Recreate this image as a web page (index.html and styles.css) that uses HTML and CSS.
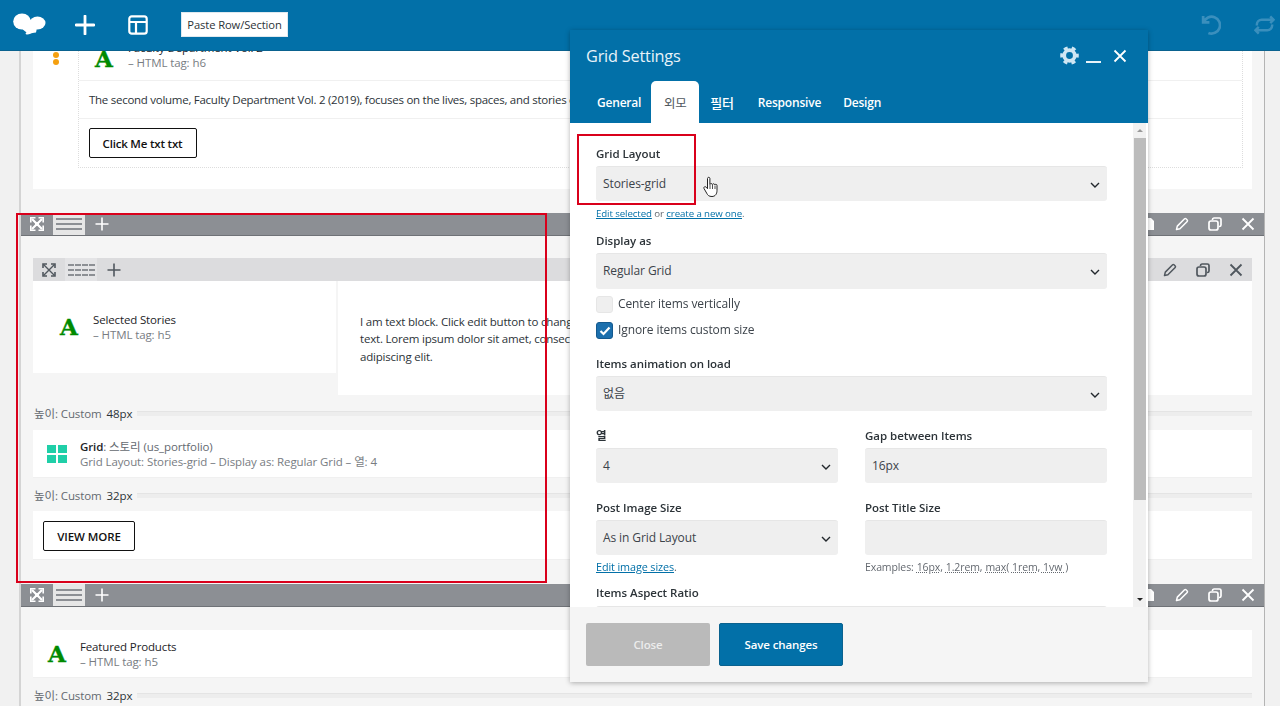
FILE: index.html
```html
<!DOCTYPE html>
<html lang="ko">
<head>
<meta charset="utf-8">
<title>Grid Settings</title>
<link rel="stylesheet" href="styles.css">
</head>
<body>
<svg class="defs" width="0" height="0" aria-hidden="true">
  <symbol id="i-expand" viewBox="0 0 14 14">
    <path d="M2 2l10 10M12 2L2 12" stroke="currentColor" stroke-width="2.200" fill="none"/>
    <path d="M.8 5.500V.8h4.700M8.500.8h4.700v4.700M13.200 8.500v4.700H8.500M5.500 13.200H.8V8.500" stroke="currentColor" stroke-width="1.600" fill="none"/>
    <circle cx="7" cy="7" r="2" fill="currentColor"/>
  </symbol>
  <symbol id="i-expand-line" viewBox="0 0 14 14">
    <path d="M1.500 1.500l11 11M12.500 1.500l-11 11" stroke="currentColor" stroke-width="1.400" fill="none"/>
    <path d="M1 5V1h4M9 1h4v4M13 9v4H9M5 13H1V9" stroke="currentColor" stroke-width="1.600" fill="none"/>
  </symbol>
  <symbol id="i-plus" viewBox="0 0 14 14"><path d="M7 0.500v13M0.500 7h13" stroke="currentColor" stroke-width="1.600" fill="none"/></symbol>
  <symbol id="i-x" viewBox="0 0 14 14"><path d="M1.500 1.500l11 11M12.500 1.500l-11 11" stroke="currentColor" stroke-width="1.800" fill="none"/></symbol>
  <symbol id="i-pencil" viewBox="0 0 14 14"><path d="M1.500 12.500l.8-3.400L9.600 1.800a1 1 0 0 1 1.400 0l1.200 1.200a1 1 0 0 1 0 1.400L4.900 11.700z" fill="none" stroke="currentColor" stroke-width="1.500" stroke-linejoin="round"/></symbol>
  <symbol id="i-copy" viewBox="0 0 14 14"><rect x="1" y="4" width="9" height="9" rx="2" fill="none" stroke="currentColor" stroke-width="1.700"/><path d="M4.500 3V2.600A1.600 1.600 0 0 1 6 1h5.400A1.600 1.600 0 0 1 13 2.600V8a1.600 1.600 0 0 1-1.600 1.500H11" fill="none" stroke="currentColor" stroke-width="1.700"/></symbol>
  <symbol id="i-paste" viewBox="0 0 14 14"><path d="M2 1h7l3 3v9H2z" fill="currentColor"/></symbol>
  <symbol id="i-chev" viewBox="0 0 10 6"><path d="M1 1l4 4 4-4" fill="none" stroke="currentColor" stroke-width="1.400"/></symbol>
</svg>

<main class="canvas">
  <section class="section first">
    <div class="card top-card">
      <div class="dots"><i></i><i></i></div>
      <div class="dotted">
        <div class="head-row">
          <span class="glyph">A</span>
          <div class="meta"><div class="name">Faculty Department Vol. 2</div><div class="sub">– HTML tag: h6</div></div>
        </div>
        <div class="text-row">The second volume, Faculty Department Vol. 2 (2019), focuses on the lives, spaces, and stories of</div>
        <div class="btn-row"><span class="outline-btn">Click Me txt txt</span></div>
      </div>
    </div>
  </section>

  <section class="section">
    <div class="bar">
      <span class="cell first-cell"><svg class="ic"><use href="#i-expand"/></svg></span>
      <span class="cell handle"><span class="lines"><i></i><i></i><i></i></span></span>
      <span class="cell"><svg class="ic"><use href="#i-plus"/></svg></span>
      <span class="tools">
        <span class="cell"><svg class="ic"><use href="#i-paste"/></svg></span>
        <span class="cell"><svg class="ic"><use href="#i-pencil"/></svg></span>
        <span class="cell"><svg class="ic"><use href="#i-copy"/></svg></span>
        <span class="cell"><svg class="ic"><use href="#i-x"/></svg></span>
      </span>
    </div>
    <div class="body">
      <div class="bar inner">
        <span class="cell first-cell"><svg class="ic"><use href="#i-expand-line"/></svg></span>
        <span class="cell handle"><span class="dashes"><i></i><i></i><i></i><i></i><i></i><i></i><i></i><i></i><i></i><i></i><i></i><i></i></span></span>
        <span class="cell"><svg class="ic"><use href="#i-plus"/></svg></span>
        <span class="tools">
          <span class="cell"><svg class="ic"><use href="#i-pencil"/></svg></span>
          <span class="cell"><svg class="ic"><use href="#i-copy"/></svg></span>
          <span class="cell"><svg class="ic"><use href="#i-x"/></svg></span>
        </span>
      </div>
      <div class="columns">
        <div class="col-a">
          <span class="glyph">A</span>
          <div class="meta"><div class="name">Selected Stories</div><div class="sub">– HTML tag: h5</div></div>
        </div>
        <div class="col-b">I am text block. Click edit button to change this<br>text. Lorem ipsum dolor sit amet, consectetur<br>adipiscing elit.</div>
      </div>
      <div class="sep tall"><span class="sep-label">높이: Custom</span><b class="sep-val">48px</b><span class="rule"></span></div>
      <div class="card grid-card">
        <svg class="grid-ic" viewBox="0 0 20 18"><path fill="#20cfa8" d="M0 0h9v8H0zM11 0h9v8h-9zM0 10h9v8H0zM11 10h9v8h-9z"/></svg>
        <div class="meta"><div class="grid-title"><b>Grid</b>: 스토리 (us_portfolio)</div><div class="sub">Grid Layout: Stories-grid – Display as: Regular Grid – 열: 4</div></div>
      </div>
      <div class="sep"><span class="sep-label">높이: Custom</span><b class="sep-val">32px</b><span class="rule"></span></div>
      <div class="card btn-card"><span class="outline-btn caps">VIEW MORE</span></div>
    </div>
  </section>

  <section class="section last">
    <div class="bar">
      <span class="cell first-cell"><svg class="ic"><use href="#i-expand"/></svg></span>
      <span class="cell handle"><span class="lines"><i></i><i></i><i></i></span></span>
      <span class="cell"><svg class="ic"><use href="#i-plus"/></svg></span>
      <span class="tools">
        <span class="cell"><svg class="ic"><use href="#i-paste"/></svg></span>
        <span class="cell"><svg class="ic"><use href="#i-pencil"/></svg></span>
        <span class="cell"><svg class="ic"><use href="#i-copy"/></svg></span>
        <span class="cell"><svg class="ic"><use href="#i-x"/></svg></span>
      </span>
    </div>
    <div class="body">
      <div class="card title-card">
        <span class="glyph">A</span>
        <div class="meta"><div class="name">Featured Products</div><div class="sub">– HTML tag: h5</div></div>
      </div>
      <div class="sep"><span class="sep-label">높이: Custom</span><b class="sep-val">32px</b><span class="rule"></span></div>
    </div>
  </section>
</main>

<header class="topbar">
  <svg class="logo" viewBox="0 0 33 24"><g fill="#fff"><ellipse cx="9" cy="8.500" rx="8.800" ry="8"/><ellipse cx="24.500" cy="10" rx="8" ry="6.500"/><ellipse cx="16" cy="12" rx="9" ry="5.500"/><path d="M9 15h15l-1 4.500c-3 .3-4 .4-5.500 1.200-1.800.8-3.500 1-4.500 .5-.8-.5-.2-1.500.5-2-1.500-.8-3.500-2.200-4.500-4.200z"/></g></svg>
  <svg class="top-plus" viewBox="0 0 20 20"><path d="M10 1v18M1 10h18" stroke="#fff" stroke-width="2.800" stroke-linecap="round"/></svg>
  <svg class="top-layout" viewBox="0 0 20 20"><rect x="1.300" y="1.300" width="17.400" height="17.400" rx="2.500" fill="none" stroke="#fff" stroke-width="2.200"/><path d="M1.500 7h17M8 7v11.500" stroke="#fff" stroke-width="2.200"/></svg>
  <span class="paste-btn">Paste Row/Section</span>
  <span class="top-history">
    <svg class="undo" viewBox="0 0 20 20"><path d="M3 2v6h6M3.500 8A8 8 0 1 1 8 18" fill="none" stroke="#3a8fbd" stroke-width="2.600"/></svg>
    <svg class="redo" viewBox="0 0 22 20"><path d="M17 1l3.500 3.500L17 8M20 4.500H8a5 5 0 0 0-5 5v1M5 19l-3.500-3.500L5 12M2 15.500h12a5 5 0 0 0 5-5v-1" fill="none" stroke="#3a8fbd" stroke-width="2.600"/></svg>
  </span>
</header>

<aside class="dialog">
  <div class="dlg-head">
    <div class="dlg-title-row">
      <h2 class="dlg-title">Grid Settings</h2>
      <span class="dlg-actions">
        <svg class="gear" viewBox="0 0 20 20"><circle cx="10" cy="10" r="5.600" fill="none" stroke="#cfe6f3" stroke-width="4"/><circle cx="10" cy="10" r="8.300" fill="none" stroke="#cfe6f3" stroke-width="3" stroke-dasharray="4.300 4.390" stroke-dashoffset="2.150"/></svg>
        <span class="minimize"></span>
        <svg class="dlg-x"><use href="#i-x"/></svg>
      </span>
    </div>
    <nav class="tabs">
      <span class="tab general">General</span>
      <span class="tab active">외모</span>
      <span class="tab ko">필터</span>
      <span class="tab">Responsive</span>
      <span class="tab">Design</span>
    </nav>
  </div>
  <div class="dlg-body">
    <div class="scrollbar"><span class="arrow up"></span><span class="thumb"></span><span class="arrow down"></span></div>
    <div class="form">
      <div class="field"><label class="lbl">Grid Layout</label><div class="select">Stories-grid<svg class="chev"><use href="#i-chev"/></svg></div>
        <p class="hint small"><a>Edit selected</a> or <a>create a new one</a>.</p></div>
      <div class="field f2"><label class="lbl">Display as</label><div class="select h36">Regular Grid<svg class="chev"><use href="#i-chev"/></svg></div>
        <div class="check"><span class="box"></span>Center items vertically</div>
        <div class="check on"><span class="box"><svg viewBox="0 0 12 10"><path d="M1.500 5l3 3 6-6.500" fill="none" stroke="#fff" stroke-width="2.200"/></svg></span>Ignore items custom size</div></div>
      <div class="field f3"><label class="lbl">Items animation on load</label><div class="select">없음<svg class="chev"><use href="#i-chev"/></svg></div></div>
      <div class="two f4">
        <div class="field"><label class="lbl">열</label><div class="select">4<svg class="chev"><use href="#i-chev"/></svg></div></div>
        <div class="field"><label class="lbl">Gap between Items</label><div class="select">16px</div></div>
      </div>
      <div class="two f4">
        <div class="field"><label class="lbl">Post Image Size</label><div class="select">As in Grid Layout<svg class="chev"><use href="#i-chev"/></svg></div><p class="hint"><a>Edit image sizes</a>.</p></div>
        <div class="field"><label class="lbl">Post Title Size</label><div class="select"></div><p class="hint grey">Examples: <u>16px,</u> <u>1.2rem,</u> <u>max( 1rem, 1vw )</u></p></div>
      </div>
      <div class="field f5"><label class="lbl">Items Aspect Ratio</label><div class="select"></div></div>
    </div>
  </div>
  <div class="dlg-foot"><span class="foot-btn close">Close</span><span class="foot-btn save">Save changes</span></div>
</aside>

<div class="mark mark-a"></div>
<div class="mark mark-b"></div>
<svg class="cursor" viewBox="0 0 16 22"><path d="M4.500 2.500c0-1.600 2.400-1.600 2.400 0v6c.3-1.200 2.300-1.200 2.500 0 .2-1 2.200-1 2.400.3.300-.9 2.200-.7 2.200.7v5c0 3.300-1.700 6-5 6-3.200 0-4.300-1.300-5.300-3.300L1 12.500c-.7-1.500 1.200-2.500 2.200-1.300l1.300 1.500z" fill="#fff" stroke="#222" stroke-width="1"/><path d="M7 9v4M9.500 9v4M12 9.500V13" stroke="#222" stroke-width=".8"/></svg>
</body>
</html>
```

FILE: styles.css
```css
* { box-sizing: border-box; }
html, body { margin: 0; height: 706px; overflow: hidden; }
body { background: #f1f1f1; font-family: "Open Sans", "Noto Sans CJK KR", sans-serif; font-size: 11.5px; color: #2c3338; letter-spacing: -.1px; }
.defs { position: absolute; }

.canvas { margin: 0 15px 0 19px; height: 706px; border-left: 2px solid #d4d4d4; border-right: 1px solid #b4b4b4; background: #f5f5f5; }
.section.first { padding: 0 12px; height: 213px; }
.section + .section .body { padding: 22px 12px 0; }
.section.last .body { padding-top: 23px; }
.section:nth-child(2) { height: 371px; }

.card { background: #fff; border-bottom: 1px solid #f0f0f0; }
.top-card { display: flex; height: 189px; padding: 0 9px 21px 0; border: 0; }
.dots { width: 45px; padding: 52px 0 0 20px; }
.dots i { display: block; width: 6px; height: 6px; border-radius: 50%; background: #f5a00f; margin-bottom: 1px; }
.dotted { flex: 1; border: 1px dotted #ddd; border-top: 0; }
.head-row { height: 81px; display: flex; align-items: flex-end; gap: 14px; padding: 0 0 10px 16px; border-bottom: 1px solid #f0f0f0; }
.text-row { height: 38px; padding: 0 10px; line-height: 38px; border-bottom: 1px solid #f0f0f0; white-space: nowrap; overflow: hidden; color: #2c3338; letter-spacing: -.27px; }
.btn-row { padding: 9px 9.500px; }
.outline-btn { display: inline-flex; align-items: center; justify-content: center; height: 30px; width: 108px; background: #fff; border: 1px solid #111; border-radius: 2px; color: #111; font-weight: 600; font-size: 11.500px; letter-spacing: -.2px; }
.caps { width: 92px; height: 30px; letter-spacing: -.1px; }

.glyph { font-family: "DejaVu Serif", serif; font-weight: 700; font-size: 23px; line-height: 22px; color: #008a00; -webkit-text-stroke: .4px #008a00; width: 19px; flex: none; }
.meta { line-height: 15px; white-space: nowrap; }
.name { color: #1d2327; letter-spacing: -.14px; }
.grid-title { color: #646970; }
.grid-title b { color: #1d2327; font-weight: 600; }
.sub { color: #787c82; }

.bar { height: 23px; display: flex; align-items: stretch; background: #8c8f94; color: #fff; border-bottom: 1px solid #6f7277; }
.cell { width: 33px; flex: none; display: flex; align-items: center; justify-content: center; }
.first-cell { width: 32px; }
.ic { width: 14px; height: 14px; }
.handle { background: #e6e6e6; width: 32px; }
.lines { width: 26px; }
.lines i { display: block; height: 2px; background: #8c8f94; margin: 3px 0; }
.tools { margin-left: auto; display: flex; }
.inner { background: #dcdcde; color: #50575e; border: 0; }
.inner .handle { background: #e4e4e6; }
.dashes { display: grid; grid-template-columns: repeat(4, 6px); gap: 3px 1px; }
.dashes i { height: 2px; background: #8c8f94; }

.columns { display: grid; grid-template-columns: 303px 1fr; gap: 2px; align-items: start; }
.col-a { background: #fff; height: 92px; display: flex; align-items: center; gap: 14px; padding: 0 0 0 27px; }
.col-b { background: #fff; height: 114px; padding: 32px 22px; line-height: 17.300px; letter-spacing: -.2px; }

.sep { height: 33px; display: flex; align-items: center; padding: 1px 0 0 1px; color: #646970; white-space: nowrap; }
.sep.tall { height: 35px; }
.sep-val { font-weight: 400; color: #2c3338; margin-left: 5px; }
.rule { flex: 1; height: 5px; margin-left: 5px; background: #ededed; border-top: 1px solid #e4e4e4; }

.grid-card { height: 48px; display: flex; align-items: center; gap: 13px; padding-left: 14px; }
.grid-ic { width: 20px; height: 18px; }
.btn-card { height: 49px; padding: 10px; }
.title-card { height: 48px; display: flex; align-items: center; gap: 13px; padding-left: 15px; }

.topbar { position: fixed; top: 0; left: 0; width: 100%; height: 51px; background: #0270a8; display: flex; align-items: center; padding-bottom: 1px; border-bottom: 1px solid #0a628f; }
.logo { width: 33px; height: 24px; margin-left: 13px; }
.top-plus { width: 20px; height: 20px; margin-left: 29px; }
.top-layout { width: 20px; height: 20px; margin-left: 33px; }
.paste-btn { margin-left: 33px; width: 107px; height: 25px; background: #fff; border: 1px solid #dfe9ef; color: #2c3338; display: flex; align-items: center; justify-content: center; font-size: 11.200px; }
.top-history { margin-left: auto; display: flex; align-items: center; gap: 33px; margin-right: 5px; }
.undo { width: 21px; height: 21px; }
.redo { width: 21px; height: 20px; }

.dialog { position: fixed; left: 570px; top: 30px; width: 578px; height: 652px; background: #fff; display: flex; flex-direction: column; box-shadow: 0 1px 5px rgba(0,0,0,.3); overflow: hidden; }
.dlg-head { height: 93px; background: #0270a8; color: #fff; padding: 0 16px; flex: none; }
.dlg-title-row { display: flex; align-items: center; height: 51px; }
.dlg-title { margin: 0; font-weight: 400; font-size: 16.300px; color: #e8f3f9; letter-spacing: -.2px; }
.dlg-actions { margin-left: auto; display: flex; align-items: center; gap: 7px; padding-right: 5px; }
.gear { width: 19px; height: 19px; }
.minimize { width: 15px; height: 2px; background: #e8f3f9; margin-top: 12px; }
.dlg-x { width: 14px; height: 14px; color: #fff; margin-left: 5px; }
.tabs { display: flex; height: 42px; color: #fff; font-weight: 600; font-size: 12px; }
.tab { padding: 0 11px; display: flex; align-items: center; letter-spacing: -.2px; }
.tab.general { padding-right: 10px; }
.tab.ko { font-size: 13px; font-weight: 500; padding-right: 13px; }
.tab.active { background: #fff; color: #50575e; border-radius: 5px 5px 0 0; width: 48px; padding: 0; justify-content: center; font-weight: 400; font-size: 12.500px; }

.dlg-body { flex: 1; position: relative; overflow: hidden; }
.scrollbar { position: absolute; right: 2px; top: 0; bottom: 0; width: 13px; background: #f1f1f1; z-index: 2; display: flex; flex-direction: column; align-items: center; }
.thumb { width: 12px; background: #bcbcbc; height: 362px; margin-top: 15px; }
.arrow { position: absolute; width: 0; height: 0; border-left: 3px solid transparent; border-right: 3px solid transparent; }
.arrow.up { top: 6px; border-bottom: 3px solid #999; }
.arrow.down { bottom: 6px; border-top: 3px solid #222; }
.form { padding: 19px 41px 0 26px; font-size: 12px; }
.lbl { display: block; height: 24px; line-height: 24px; font-size: 11.500px; font-weight: 600; color: #2c3338; letter-spacing: -.03px; }
.select { position: relative; height: 35px; padding: 0 7px; line-height: 33px; background: #efefef; border-top: 1px solid #e6e6e6; border-radius: 3px; color: #3c434a; }
.h36 { height: 36px; line-height: 34px; }
.chev { position: absolute; right: 7px; top: 15px; width: 10px; height: 6px; color: #23282d; }
.hint { margin: 5px 0 0; font-size: 10.800px; line-height: 14px; color: #646970; }
.hint.small { font-size: 9.700px; margin-top: 6px; }
.hint.grey { font-size: 10.500px; word-spacing: .3px; }
.hint a { color: #0270a8; text-decoration: underline; }
.hint u { text-decoration: underline dotted; }
.f2 { margin-top: 8px; }
.check { display: flex; align-items: flex-start; gap: 5px; height: 17px; line-height: 16px; margin-top: 7px; color: #3c434a; }
.check + .check { margin-top: 9px; }
.box { width: 17px; height: 17px; border-radius: 3px; background: #efefef; border: 1px solid #e6e6e6; display: flex; align-items: center; justify-content: center; }
.check.on .box { background: #1b6fad; border-color: #14598e; }
.box svg { width: 12px; height: 10px; }
.f3 { margin-top: 13px; }
.two { display: grid; grid-template-columns: 242px 242px; gap: 27px; }
.f4 { margin-top: 13px; }
.f5 { margin-top: 7px; }
.f5 .lbl { height: 25px; }

.dlg-foot { height: 75px; flex: none; background: #f5f5f5; display: flex; gap: 9px; padding: 16px; position: relative; z-index: 3; }
.foot-btn { width: 124px; height: 43px; border-radius: 2px; display: flex; align-items: center; justify-content: center; color: #fff; font-weight: 600; font-size: 11.500px; }
.close { background: #bababa; color: #ececec; }
.save { background: #0270a8; border: 1px solid #0a628f; }

.mark { position: fixed; border: 2px solid #d9001b; pointer-events: none; }
.mark-a { left: 16px; top: 213px; width: 531px; height: 370px; }
.mark-b { left: 577px; top: 134px; width: 119px; height: 71px; }
.cursor { position: fixed; left: 703px; top: 176px; width: 16px; height: 22px; }
```
